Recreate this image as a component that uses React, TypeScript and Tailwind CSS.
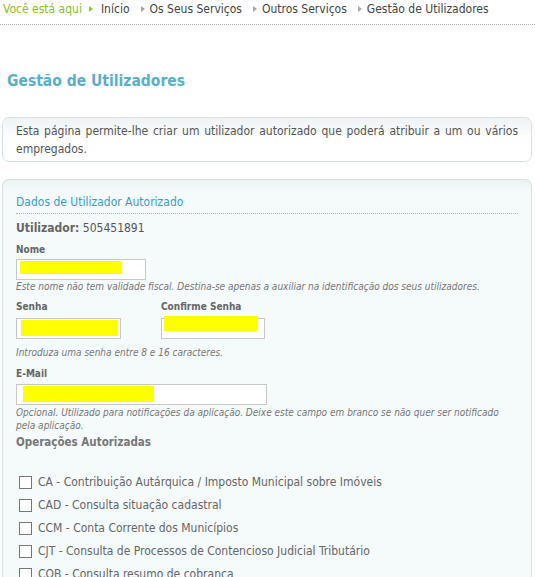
import React from "react";

const font = "font-['Tahoma','DejaVu_Sans_Condensed','DejaVu_Sans',sans-serif]";

const crumbs = ["Início", "Os Seus Serviços", "Outros Serviços", "Gestão de Utilizadores"];

const operations = [
  "CA - Contribuição Autárquica / Imposto Municipal sobre Imóveis",
  "CAD - Consulta situação cadastral",
  "CCM - Conta Corrente dos Municípios",
  "CJT - Consulta de Processos de Contencioso Judicial Tributário",
  "COB - Consulta resumo de cobrança",
];

function Arrow({ first }: { first?: boolean }) {
  return (
    <svg
      width="4"
      height="6"
      viewBox="0 0 4 6"
      className={first ? "ml-[7px] mr-[8px]" : "ml-[11px] mr-[5px]"}
    >
      <path d="M0 0 L4 3 L0 6 Z" fill={first ? "#9cc52a" : "#a8a8a8"} />
    </svg>
  );
}

function Field({ width, markClass }: { width: string; markClass: string }) {
  return (
    <div className={`relative h-[21px] border border-[#c8c8c8] bg-white ${width}`}>
      {/* yellow redaction over the value */}
      <div className={`absolute bg-[#ffff00] ${markClass}`} />
    </div>
  );
}

export default function App() {
  return (
    <div className={`w-[535px] h-[577px] overflow-hidden bg-white text-[#555] ${font}`}>
      {/* breadcrumb */}
      <div className="flex items-center h-[25px] pl-[3px] pb-[7px] text-[12px] border-b border-dotted border-[#b5b5b5]">
        <span className="text-[#8cbd1c]">Você está aqui</span>
        {crumbs.map((c, i) => (
          <React.Fragment key={c}>
            <Arrow first={i === 0} />
            <span className="text-[#444]">{c}</span>
          </React.Fragment>
        ))}
      </div>

      <h1 className="pl-[7px] pt-[45px] text-[15.5px] font-bold text-[#5aaecb] leading-[22px]">Gestão de Utilizadores</h1>

      {/* intro */}
      <div className="mx-[2px] mt-[25px] w-[530px] rounded-[7px] border border-[#d6e2e5] bg-gradient-to-b from-[#eef3f4] via-white to-white px-[13px] pt-[4px] pb-[3px]">
        <p className="text-[12px] leading-[18px] text-justify text-[#555]">
          Esta página permite-lhe criar um utilizador autorizado que poderá atribuir a um ou vários empregados.
        </p>
      </div>

      {/* form */}
      <div className="mx-[2px] mt-[17px] w-[530px] rounded-t-[7px] border border-b-0 border-[#d6e2e5] bg-gradient-to-b from-[#eaf2f4] to-[#f5fafb] to-[12px] px-[13px] pt-[14px]">
        <div className="text-[12px] text-[#3d9dbe] pb-[3px] border-b border-dotted border-[#a9b5b8] leading-[16px]">
          Dados de Utilizador Autorizado
        </div>
        <div className="mt-[6px] text-[12px] leading-[16px]">
          <span className="font-bold text-[#666]">Utilizador:</span> 505451891
        </div>

        <div className="mt-[7px] text-[10px] font-bold text-[#666] leading-[14px]">Nome</div>
        <div className="mt-[2px]">
          <Field width="w-[130px]" markClass="left-[3px] top-[1px] w-[102px] h-[13px]" />
        </div>
        <p className="mt-[1px] text-[10px] italic text-[#777] leading-[12px]">
          Este nome não tem validade fiscal. Destina-se apenas a auxiliar na identificação dos seus utilizadores.
        </p>

        <div className="mt-[7px] flex gap-[40px]">
          <div>
            <div className="text-[10px] font-bold text-[#666] leading-[14px]">Senha</div>
            <div className="mt-[4px]">
              <Field width="w-[105px]" markClass="left-[4px] top-[1px] w-[96px] h-[16px]" />
            </div>
          </div>
          <div>
            <div className="text-[10px] font-bold text-[#666] leading-[14px]">Confirme Senha</div>
            <div className="mt-[4px]">
              <Field width="w-[104px]" markClass="left-[2px] top-[-3px] w-[94px] h-[15px]" />
            </div>
          </div>
        </div>
        <p className="mt-[8px] text-[10px] italic text-[#777] leading-[12px]">
          Introduza uma senha entre 8 e 16 caracteres.
        </p>

        <div className="mt-[8px] text-[10px] font-bold text-[#666] leading-[14px]">E-Mail</div>
        <div className="mt-[3px]">
          <Field width="w-[251px]" markClass="left-[6px] top-[1px] w-[131px] h-[16px]" />
        </div>
        <p className="mt-[1px] text-[10px] italic text-[#777] leading-[13px]">
          Opcional. Utilizado para notificações da aplicação. Deixe este campo em branco se não quer ser notificado pela aplicação.
        </p>

        <div className="mt-[2px] text-[11.5px] font-bold text-[#777] leading-[16px]">Operações Autorizadas</div>

        <ul className="mt-[24px] pl-[3px] flex flex-col gap-[7px]">
          {operations.map((op) => (
            <li key={op} className="flex items-center h-[16px] text-[12px] text-[#666]">
              <span className="w-[13px] h-[13px] border border-[#777] bg-white mr-[6px]" />
              {op}
            </li>
          ))}
        </ul>
      </div>
    </div>
  );
}
